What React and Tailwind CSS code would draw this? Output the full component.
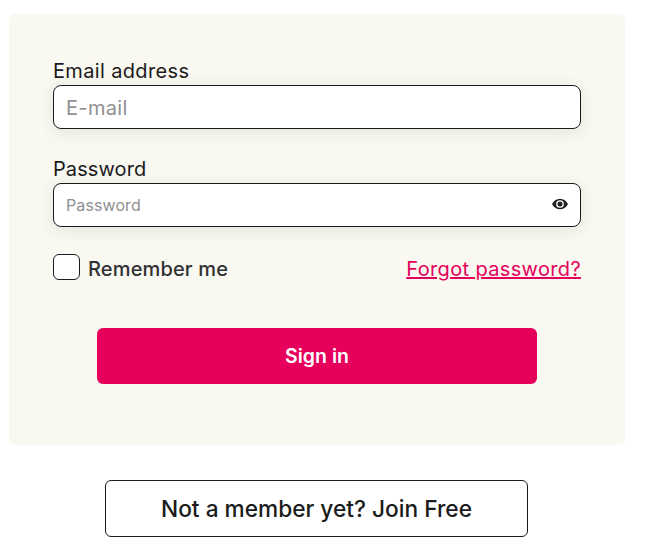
import { useState } from "react";

const inputClass =
  "h-11 w-full rounded-lg border border-[#1b1b1b] bg-white pl-3 text-[#1b1b1b] shadow-[0_3px_16px_rgba(60,60,40,0.1)] outline-none";

export default function App() {
  const [remember, setRemember] = useState(false);

  return (
    <div className="min-h-[553px] bg-white pt-3.5 pl-[9px] font-['Inter',sans-serif]">
      <form className="flex h-[431px] w-[616px] flex-col rounded-md bg-[#f9f8f1] pt-[43px] pr-11 pl-11">
        <label className="block text-xl leading-7 tracking-[0.35px] text-[#1b1b1b]">
          Email address
          <input
            type="email"
            placeholder="E-mail"
            className={`${inputClass} pt-0.5 text-xl placeholder:text-[#8e9094]`}
          />
        </label>

        <label className="mt-[26px] block text-xl leading-7 tracking-[0.1px] text-[#1b1b1b]">
          Password
          <span className="relative block">
            <input
              type="password"
              placeholder="Password"
              className={`${inputClass} text-base placeholder:text-[#8e9094]`}
            />
            <svg
              viewBox="0 0 24 16"
              className="absolute top-[15px] right-[13px] h-3 w-4 text-[#222]"
              fill="currentColor"
            >
              <path
                fillRule="evenodd"
                d="M12 0C6.500 0 2.300 3.200 0 8c2.300 4.800 6.500 8 12 8s9.700-3.200 12-8c-2.300-4.800-6.500-8-12-8Zm0 2.200a5.800 5.800 0 1 1 0 11.600 5.800 5.800 0 0 1 0-11.600Z"
              />
              <circle cx="12" cy="8" r="3.800" />
            </svg>
          </span>
        </label>

        <div className="mt-[27px] flex h-[26px] items-center justify-between">
          <label className="flex items-center gap-2 text-xl font-medium tracking-[0.15px] text-[#2f3133]">
            <input
              type="checkbox"
              checked={remember}
              onChange={(event) => setRemember(event.target.checked)}
              className="h-[26px] w-[27px] appearance-none rounded-md border border-[#1b1b1b] bg-white"
            />
            <span className="mt-[3px]">Remember me</span>
          </label>
          <a href="#" className="mt-1 text-xl tracking-[0.35px] text-[#e6005c] underline">
            Forgot password?
          </a>
        </div>

        <button
          type="button"
          className="mx-auto mt-12 h-14 w-[440px] rounded-md bg-[#e6005c] pt-0.5 text-[19.500px] font-semibold text-white"
        >
          Sign in
        </button>
      </form>

      <button
        type="button"
        className="mt-[35px] ml-24 h-[57px] w-[423px] rounded-md border border-[#1b1b1b] bg-white pt-0.5 text-[22.700px] font-medium text-[#1b1b1b]"
      >
        Not a member yet? Join Free
      </button>
    </div>
  );
}
